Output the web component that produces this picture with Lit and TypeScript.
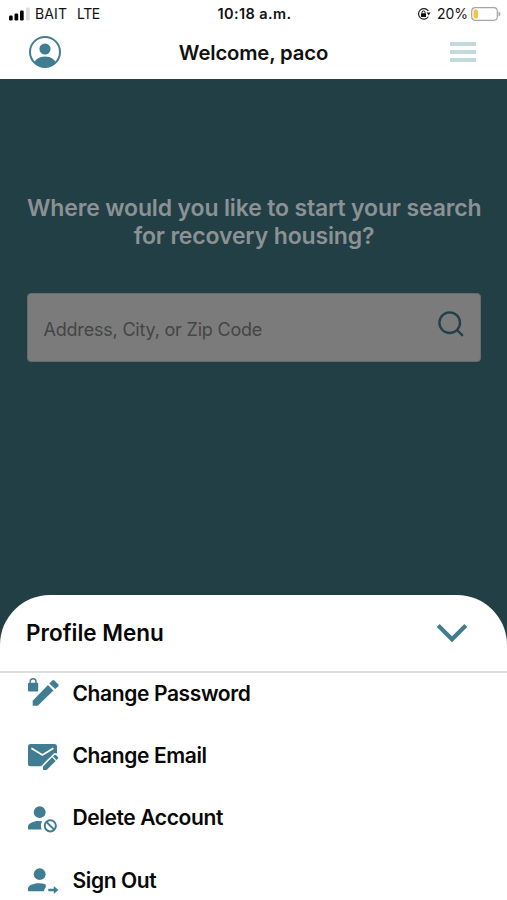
import { LitElement, html, css, svg } from "lit";
import { customElement } from "lit/decorators.js";

const passwordIcon = svg`
  <rect x="1" y="5.8" width="10.200" height="8.700" rx="1"/>
  <path d="M3.200 7V4.600a2.900 2.900 0 0 1 5.800 0V7" fill="none" stroke="currentColor" stroke-width="1.400"/>
  <path d="M5.700 28.800v-5L21 8l5.400 5.400-15.600 15.400z"/>
  <path d="M22.300 6.400l3-3q1-.8 2 0l3.900 3.800q.8 1 0 2l-3 2.900z"/>`;
const emailIcon = svg`
  <path d="M3.500 5h24A2.500 2.500 0 0 1 30 7.500V15L14.500 27.200h-11A2.500 2.500 0 0 1 1 24.700V7.500A2.500 2.500 0 0 1 3.500 5z"/>
  <path d="M4.400 9.200l11 6.800 11-6.800" fill="none" stroke="#fff" stroke-width="1.900"/>
  <path d="M14.500 33v-6.300L27 14.200h5v6L19 33z" fill="#fff"/>
  <path d="M16 31v-3.600l9.100-9.100 3.600 3.600-9.100 9.100z"/>
  <path d="M26 17.400l1.500-1.500q.7-.5 1.300 0l2.200 2.200q.5.700 0 1.300l-1.500 1.500z"/>`;
const deleteIcon = svg`
  <circle cx="12.700" cy="10.200" r="5.900"/>
  <path d="M1 27.500v-3c0-3 5-5.600 11-5.600q1.800 0 3.200.3a9 9 0 0 0-.5 8.300z"/>
  <circle cx="23.300" cy="23.800" r="5.600" fill="none" stroke="currentColor" stroke-width="2"/>
  <path d="M19.500 20l7.600 7.600" stroke="currentColor" stroke-width="2"/>`;
const signOutIcon = svg`
  <circle cx="12.700" cy="10.200" r="5.900"/>
  <path d="M1 27.300v-2.800c0-3 5-5.300 11-5.300q3.800 0 6.800 1.300v2.700q-1.800 1.500-1.800 4.100z"/>
  <path d="M21.300 24.800h5.500v-2.900l4.600 4.100-4.600 4.100v-2.900h-5.500z"/>`;

const items = [
  { label: "Change Password", icon: passwordIcon },
  { label: "Change Email", icon: emailIcon },
  { label: "Delete Account", icon: deleteIcon },
  { label: "Sign Out", icon: signOutIcon },
];

@customElement("app-root")
export class AppRoot extends LitElement {
  static styles = css`
    :host {
      display: flex;
      flex-direction: column;
      height: 900px;
      overflow: hidden;
      background: #223f46;
      color: #111;
      font-family: Inter, "Liberation Sans", sans-serif;
      white-space: nowrap;
    }
    svg { display: block; flex: none; }
    .top { height: 79px; background: #fff; flex: none; }
    .status, .bar {
      display: grid;
      grid-template-columns: 1fr auto 1fr;
      align-items: center;
    }
    .status { height: 27px; padding: 0 6px 0 8px; font-size: 14px; }
    .left, .right { display: flex; align-items: center; }
    .right { justify-content: flex-end; }
    .carrier { margin-left: 5px; letter-spacing: 0.1px; }
    .network { margin-left: 10px; letter-spacing: -0.4px; }
    .time { font-weight: 600; font-size: 14.5px; letter-spacing: 0.4px; }
    .lock { margin-right: 6px; }
    .battery { margin-left: 3px; }
    .bar { height: 50px; padding: 0 31px 0 29px; }
    .title {
      margin: 0 0 0 2px;
      font-size: 20.3px;
      font-weight: 560;
      letter-spacing: -0.15px;
    }
    .profile { color: #417d92; margin-left: -1px; }
    .search-area { padding: 116px 26px 0 27px; flex: none; height: 400px; }
    .question {
      margin: 0;
      text-align: center;
      color: #8c9194;
      font-size: 23px;
      line-height: 27.5px;
      font-weight: 600;
      letter-spacing: -0.15px;
    }
    .field {
      display: flex;
      align-items: center;
      justify-content: space-between;
      box-sizing: border-box;
      height: 69px;
      margin-top: 43px;
      padding: 0 17px 0 15.5px;
      border: 1px solid #686b6c;
      border-radius: 4px;
      background: #7b7b7b;
      color: #454545;
      font-size: 18px;
    }
    .placeholder { padding-top: 3px; letter-spacing: -0.2px; }
    .magnifier { margin-top: -7px; margin-right: -1px; }
    .sheet {
      height: 305px;
      flex: none;
      background: #fff;
      border-radius: 50px 50px 0 0;
      color: #080808;
    }
    .sheet-head {
      display: flex;
      align-items: center;
      justify-content: space-between;
      box-sizing: border-box;
      height: 78px;
      padding: 0 39px 0 26px;
      border-bottom: 2px solid #dedede;
    }
    .sheet-title {
      margin: -1px 0 0;
      font-size: 22.5px;
      font-weight: 640;
      letter-spacing: 0;
    }
    .menu { margin: -11px 0 0; padding: 0; list-style: none; }
    .item {
      display: flex;
      align-items: center;
      height: 62.3px;
      padding-left: 27px;
      font-size: 21px;
      font-weight: 640;
      letter-spacing: -0.38px;
    }
    .icon { color: #417d92; fill: currentColor; margin-right: 13.5px; overflow: visible; }
  `;

  render() {
    return html`
      <header class="top">
        <div class="status">
          <div class="left">
            <svg width="22" height="14" viewBox="0 0 22 14">
              <rect x="1" y="8.500" width="3.700" height="5" rx="1.200"/>
              <rect x="6.500" y="6.500" width="3.700" height="7" rx="1.200"/>
              <rect x="12" y="3.500" width="3.700" height="10" rx="1.200"/>
              <rect x="18" y=".5" width="3.700" height="13" rx="1.200" fill="#ddd"/>
            </svg>
            <span class="carrier">BAIT</span><span class="network">LTE</span>
          </div>
          <span class="time">10:18 a.m.</span>
          <div class="right">
            <svg class="lock" width="14" height="14" viewBox="0 0 14 14">
              <path d="M11.300 4A5.300 5.300 0 1 0 11.300 9.700" fill="none" stroke="#222" stroke-width="1.200"/>
              <path d="M9.600 5.500h4L11.600 8.500z" fill="#222"/>
              <rect x="4" y="6.300" width="5" height="3.700" rx=".6" fill="#111"/>
              <path d="M5 6.500V5.400a1.500 1.500 0 0 1 3 0v1.100" fill="none" stroke="#111"/>
            </svg>
            <span class="percent">20%</span>
            <svg class="battery" width="30" height="14" viewBox="0 0 30 14">
              <rect x=".7" y=".7" width="25.600" height="12.600" rx="3.500" fill="#fff" stroke="#a5a5a5" stroke-width="1.200"/>
              <rect x="2.500" y="2.500" width="4.500" height="9" rx="1.700" fill="#f6c445"/>
              <path d="M27.500 4.500q2 .6 2 2.500t-2 2.500z" fill="#a5a5a5"/>
            </svg>
          </div>
        </div>
        <div class="bar">
          <svg class="profile" width="34" height="34" viewBox="0 0 34 34">
            <defs><clipPath id="ring"><circle cx="17" cy="17" r="15"/></clipPath></defs>
            <circle cx="17" cy="17" r="15" fill="none" stroke="currentColor" stroke-width="2"/>
            <circle cx="17" cy="14" r="5.600" fill="currentColor"/>
            <ellipse cx="17" cy="29" rx="11" ry="7.500" fill="currentColor" clip-path="url(#ring)"/>
          </svg>
          <h1 class="title">Welcome, paco</h1>
          <div class="right">
            <svg width="26" height="22" viewBox="0 0 26 22" fill="#c3d8df">
              <rect y="1" width="26" height="4"/><rect y="9" width="26" height="4"/><rect y="17" width="26" height="4"/>
            </svg>
          </div>
        </div>
      </header>
      <main class="search-area">
        <h2 class="question">Where would you like to start your search<br>for recovery housing?</h2>
        <div class="field">
          <span class="placeholder">Address, City, or Zip Code</span>
          <svg class="magnifier" width="26" height="26" viewBox="0 0 26 26" fill="none" stroke="#223f4a" stroke-width="2.300">
            <circle cx="11.700" cy="11.700" r="10.300"/><path d="M18.700 18.700l6.200 6.200"/>
          </svg>
        </div>
      </main>
      <div class="sheet">
        <div class="sheet-head">
          <h2 class="sheet-title">Profile Menu</h2>
          <svg width="32" height="20" viewBox="0 0 32 20" fill="none" stroke="#417d92" stroke-width="4.200">
            <path d="M2.200 2.500L16 16.300 29.800 2.500"/>
          </svg>
        </div>
        <ul class="menu">
          ${items.map(
            (item) => html`<li class="item">
              <svg class="icon" width="32" height="32" viewBox="0 0 32 32">${item.icon}</svg>
              <span class="label">${item.label}</span>
            </li>`
          )}
        </ul>
      </div>
    `;
  }
}
